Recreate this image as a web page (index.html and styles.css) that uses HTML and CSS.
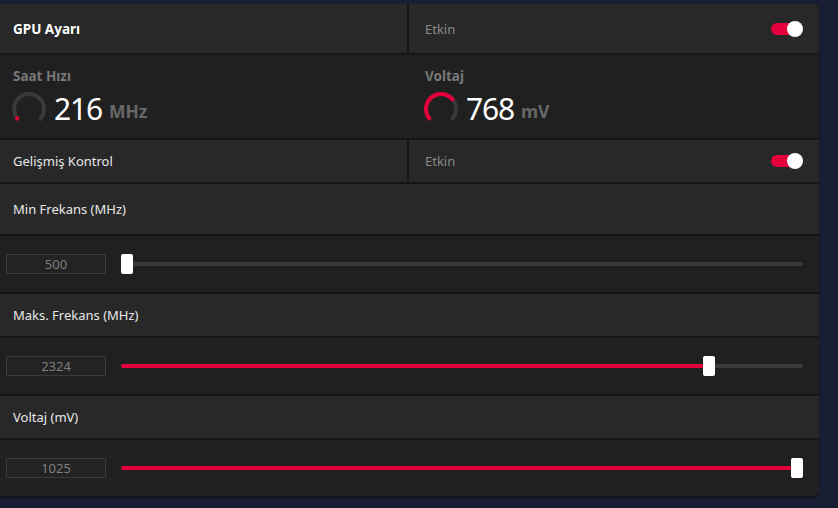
FILE: index.html
```html
<!DOCTYPE html>
<html lang="tr">
<head>
<meta charset="utf-8">
<title>GPU Ayarı</title>
<link rel="stylesheet" href="styles.css">
</head>
<body>
<div class="panel">
  <div class="row split h49">
    <div class="cell"><span class="title">GPU Ayarı</span></div>
    <div class="cell right">
      <span class="muted">Etkin</span>
      <span class="toggle"><span class="track"></span><span class="knob"></span></span>
    </div>
  </div>

  <div class="row split dark h83">
    <div class="cell metric">
      <div class="metric-title">Saat Hızı</div>
      <div class="metric-body">
        <svg class="gauge" width="34" height="34" viewBox="0 0 34 34">
          <circle cx="17" cy="17" r="15" fill="none" stroke="#3a3a3a" stroke-width="4" stroke-dasharray="70.69 94.25" transform="rotate(135 17 17)"/>
          <circle cx="17" cy="17" r="15" fill="none" stroke="#e4003a" stroke-width="4" stroke-dasharray="3.5 94.25" transform="rotate(135 17 17)"/>
        </svg>
        <span class="value">216</span>
        <span class="unit">MHz</span>
      </div>
    </div>
    <div class="cell metric rightm">
      <div class="metric-title">Voltaj</div>
      <div class="metric-body">
        <svg class="gauge" width="34" height="34" viewBox="0 0 34 34">
          <circle cx="17" cy="17" r="15" fill="none" stroke="#3a3a3a" stroke-width="4" stroke-dasharray="70.69 94.25" transform="rotate(135 17 17)"/>
          <circle cx="17" cy="17" r="15" fill="none" stroke="#e4003a" stroke-width="4" stroke-dasharray="50 94.25" transform="rotate(135 17 17)"/>
        </svg>
        <span class="value">768</span>
        <span class="unit">mV</span>
      </div>
    </div>
  </div>

  <div class="row split h42">
    <div class="cell"><span class="label">Gelişmiş Kontrol</span></div>
    <div class="cell right">
      <span class="muted">Etkin</span>
      <span class="toggle"><span class="track"></span><span class="knob"></span></span>
    </div>
  </div>

  <div class="row labelrow h50"><span class="label">Min Frekans (MHz)</span></div>
  <div class="row dark sliderrow">
    <div class="numbox">500</div>
    <div class="slider">
      <div class="fill" style="width: 6px"></div>
      <div class="thumb" style="left: 0px"></div>
    </div>
  </div>

  <div class="row labelrow h42"><span class="label">Maks. Frekans (MHz)</span></div>
  <div class="row dark sliderrow">
    <div class="numbox">2324</div>
    <div class="slider">
      <div class="fill" style="width: 588px"></div>
      <div class="thumb" style="left: 582px"></div>
    </div>
  </div>

  <div class="row labelrow h42"><span class="label">Voltaj (mV)</span></div>
  <div class="row dark sliderrow">
    <div class="numbox">1025</div>
    <div class="slider">
      <div class="fill" style="width: 676px"></div>
      <div class="thumb" style="left: 670px"></div>
    </div>
  </div>
</div>
</body>
</html>
```

FILE: styles.css
```css
* { box-sizing: border-box; }

html, body {
  margin: 0;
  padding: 0;
  background: #1a1e32;
  height: 100%;
}

body {
  font-family: "Noto Sans", "Open Sans", "DejaVu Sans", sans-serif;
  font-size: 13px;
  color: #e6e6e6;
  padding-top: 4px;
}

.panel {
  width: 819px;
  background: #161616;
  display: flex;
  flex-direction: column;
  gap: 2px;
  border-radius: 0 5px 5px 0;
  overflow: hidden;
  box-shadow: 0 2px 2px rgba(0, 0, 0, 0.45);
}

.row {
  background: #282828;
}

.row.dark {
  background: #202020;
}

.split {
  display: grid;
  grid-template-columns: 407px 1fr;
  column-gap: 2px;
  background: #161616;
}

.split > .cell {
  background: #282828;
}

.split.dark > .cell {
  background: #202020;
}

.h49 { height: 49px; }
.h83 { height: 83px; }
.h42 { height: 42px; }
.h50 { height: 50px; }

.cell {
  display: flex;
  align-items: center;
  padding-left: 13px;
}

.cell.right {
  padding-left: 16px;
  padding-right: 16px;
  justify-content: space-between;
}

.title {
  font-weight: 700;
  color: #ffffff;
  font-size: 13.5px;
}

.label {
  color: #e8e8e8;
}

.muted {
  color: #8a8a8a;
}

.toggle {
  position: relative;
  width: 32px;
  height: 16px;
  display: block;
}

.toggle .track {
  position: absolute;
  left: 0;
  top: 2px;
  width: 26px;
  height: 12px;
  border-radius: 6px;
  background: #e4003a;
}

.toggle .knob {
  position: absolute;
  right: 0;
  top: 0;
  width: 16px;
  height: 16px;
  border-radius: 50%;
  background: #ffffff;
}

.metric {
  flex-direction: column;
  align-items: flex-start;
  justify-content: flex-start;
  padding-top: 12px;
  padding-left: 13px;
}

.metric.rightm {
  padding-left: 16px;
}

.metric-title {
  font-weight: 700;
  color: #787878;
  font-size: 13.5px;
  line-height: 18px;
}

.metric-body {
  display: flex;
  align-items: center;
  margin-top: 7px;
  margin-left: -1px;
}

.gauge {
  display: block;
  margin-right: 8px;
}

.value {
  font-size: 30px;
  font-weight: 400;
  color: #ffffff;
  line-height: 34px;
  letter-spacing: -1.2px;
}

.unit {
  font-size: 17.5px;
  font-weight: 700;
  color: #676767;
  margin-left: 7px;
  margin-top: 3px;
}

.labelrow {
  display: flex;
  align-items: center;
  padding-left: 13px;
}

.sliderrow {
  height: 56px;
  display: flex;
  align-items: center;
  padding-left: 6px;
  padding-right: 16px;
}

.numbox {
  width: 100px;
  height: 20px;
  border: 1px solid #3b3b3b;
  background: #232323;
  color: #7e7e7e;
  font-size: 13px;
  display: flex;
  align-items: center;
  justify-content: center;
  margin-right: 15px;
}

.slider {
  position: relative;
  flex: 1;
  height: 4px;
  border-radius: 2px;
  background: #3a3a3a;
}

.slider .fill {
  position: absolute;
  left: 0;
  top: 0;
  height: 4px;
  border-radius: 2px;
  background: #e4003a;
}

.slider .thumb {
  position: absolute;
  top: -8px;
  width: 12px;
  height: 20px;
  border-radius: 2px;
  background: #ffffff;
}
```
